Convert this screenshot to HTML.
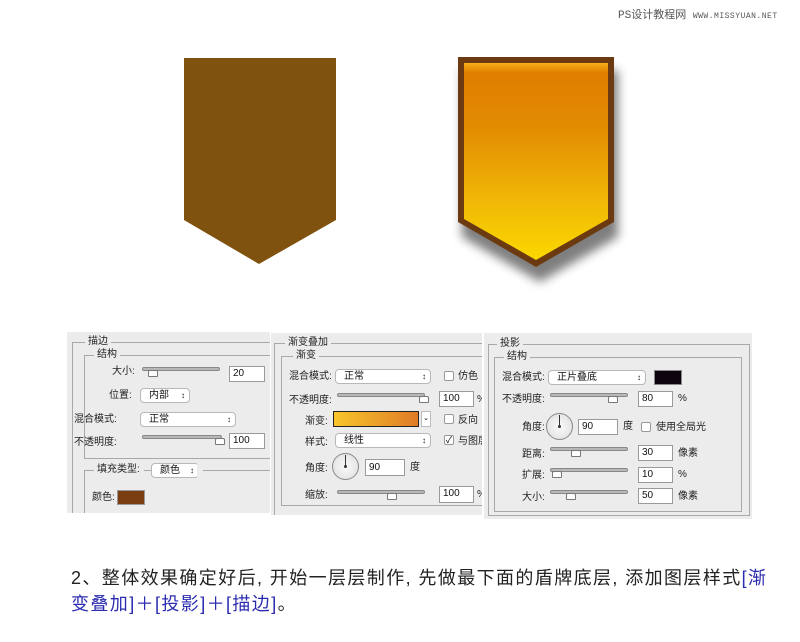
<!DOCTYPE html>
<html><head><meta charset="utf-8">
<style>
*{margin:0;padding:0;box-sizing:border-box}
body{width:800px;height:642px;background:#fff;position:relative;overflow:hidden;font-family:"Liberation Sans","Noto Sans CJK SC",sans-serif;}
.a{position:absolute}
.panel{position:absolute;background:#ececec;overflow:hidden}
.l{position:absolute;font-size:10px;color:#222;line-height:12px;white-space:nowrap}
.box{position:absolute;border:1px solid #a8a8a8}
.t{position:absolute;background:#ececec;font-size:10px;color:#222;line-height:12px;padding:0 3px}
.in{position:absolute;background:#fff;border:1px solid #9a9a9a;font-size:10px;line-height:13px;padding-left:3px;color:#111}
.dd{position:absolute;background:#fff;border:1px solid #b8b8b8;border-radius:4px;font-size:10px;line-height:13px;padding-left:8px;color:#111}
.dd:after{content:"\2195";position:absolute;right:4px;top:0;font-size:8px}
.sl{position:absolute;height:4px;background:#b8b8b8;border:1px solid #888;border-radius:2px}
.th{position:absolute;width:10px;height:7px;border:1px solid #777;background:#fff;border-radius:2px 2px 1px 1px}
.cb{position:absolute;width:10px;height:10px;border:1px solid #999;background:#fff;border-radius:2px;font-size:9px;line-height:9px;text-align:center}
.dial{position:absolute;width:27px;height:27px;border:1px solid #888;border-radius:50%;background:radial-gradient(#fafafa,#ddd)}
.dial:before{content:"";position:absolute;left:12px;top:1px;width:1px;height:12px;background:#333}
.dial:after{content:"";position:absolute;left:11px;top:11px;width:3px;height:3px;border-radius:50%;background:#333}
</style></head><body>

<div class="l" style="left:618px;top:10px;font-size:11px;color:#555;font-family:'Liberation Mono','Noto Sans CJK SC',monospace">PS设计教程网 <span style="font-size:8px;letter-spacing:0.5px">WWW.MISSYUAN.NET</span></div>

<svg class="a" style="left:0;top:0" width="800" height="300">
<defs>
<linearGradient id="g" x1="0" y1="0" x2="0" y2="1">
<stop offset="0" stop-color="#f7b019"/><stop offset="0.05" stop-color="#e07e00"/><stop offset="0.35" stop-color="#e38d02"/><stop offset="0.7" stop-color="#f0b806"/><stop offset="1" stop-color="#fbd800"/>
</linearGradient>
<filter id="sh" x="-30%" y="-30%" width="160%" height="170%"><feGaussianBlur stdDeviation="5"/></filter>
</defs>
<polygon points="184,58 336,58 336,220 259,264 184,220" fill="#80520f"/>
<polygon points="462,70 618,70 618,237 540,282 462,237" fill="#000" opacity="0.5" filter="url(#sh)"/>
<polygon points="458,57 614,57 614,222 536,267 458,222" fill="#6b3a10"/>
<polygon points="464,63 608,63 608,219 536,260 464,219" fill="url(#g)"/>
</svg>

<!-- panel 1 -->
<div class="panel" style="left:67px;top:332px;width:203px;height:181px">
 <div class="box" style="left:5px;top:10px;width:200px;height:175px;border-right:none;border-bottom:none"></div>
 <div class="t" style="left:18px;top:4px">描边</div>
 <div class="box" style="left:17px;top:23px;width:190px;height:104px;border-right:none"></div>
 <div class="t" style="left:27px;top:17px">结构</div>
 <div class="l" style="left:45px;top:34px">大小:</div>
 <div class="sl" style="left:75px;top:35px;width:78px"></div><div class="th" style="left:81px;top:38px"></div>
 <div class="in" style="left:162px;top:34px;width:36px;height:16px">20</div>
 <div class="l" style="left:42px;top:58px">位置:</div>
 <div class="dd" style="left:73px;top:56px;width:50px;height:15px">内部</div>
 <div class="l" style="left:7px;top:82px">混合模式:</div>
 <div class="dd" style="left:73px;top:80px;width:96px;height:15px">正常</div>
 <div class="l" style="left:7px;top:105px">不透明度:</div>
 <div class="sl" style="left:75px;top:103px;width:80px"></div><div class="th" style="left:148px;top:106px"></div>
 <div class="in" style="left:162px;top:101px;width:36px;height:16px">100</div>
 <div class="box" style="left:17px;top:138px;width:190px;height:50px;border-right:none;border-bottom:none"></div>
 <div class="t" style="left:27px;top:132px;padding-right:4px">填充类型: </div>
 <div class="dd" style="left:84px;top:131px;width:48px;height:15px">颜色</div>
 <div class="a" style="left:130px;top:131px;width:6px;height:14px;background:#ececec"></div>
 <div class="l" style="left:25px;top:160px">颜色:</div>
 <div class="a" style="left:50px;top:158px;width:28px;height:15px;background:#7a3e12;border:1px solid #999"></div>
</div>

<!-- panel 2 -->
<div class="panel" style="left:271px;top:333px;width:211px;height:182px">
 <div class="box" style="left:3px;top:10px;width:215px;height:180px;border-right:none"></div>
 <div class="t" style="left:14px;top:4px">渐变叠加</div>
 <div class="box" style="left:10px;top:23px;width:210px;height:150px;border-right:none"></div>
 <div class="t" style="left:22px;top:17px">渐变</div>
 <div class="l" style="left:18px;top:38px">混合模式:</div>
 <div class="dd" style="left:64px;top:36px;width:96px;height:15px">正常</div>
 <div class="cb" style="left:173px;top:38px"></div><div class="l" style="left:187px;top:38px">仿色</div>
 <div class="l" style="left:18px;top:62px">不透明度:</div>
 <div class="sl" style="left:66px;top:60px;width:88px"></div><div class="th" style="left:148px;top:63px"></div>
 <div class="in" style="left:168px;top:58px;width:35px;height:16px">100</div><div class="l" style="left:206px;top:61px">%</div>
 <div class="l" style="left:34px;top:83px">渐变:</div>
 <div class="a" style="left:62px;top:78px;width:86px;height:16px;border:1px solid #222;background:linear-gradient(90deg,#f8c52a,#eca52a 45%,#e07b26)"></div>
 <div class="a" style="left:150px;top:78px;width:10px;height:16px;background:#fff;border:1px solid #bbb;font-size:7px;text-align:center;line-height:14px">⌄</div>
 <div class="cb" style="left:173px;top:81px"></div><div class="l" style="left:187px;top:82px">反向</div>
 <div class="l" style="left:34px;top:104px">样式:</div>
 <div class="dd" style="left:64px;top:100px;width:96px;height:15px">线性</div>
 <div class="cb" style="left:173px;top:102px">✓</div><div class="l" style="left:187px;top:103px">与图层</div>
 <div class="l" style="left:34px;top:130px">角度:</div>
 <div class="dial" style="left:61px;top:120px"></div>
 <div class="in" style="left:94px;top:126px;width:40px;height:17px;line-height:15px">90</div>
 <div class="l" style="left:139px;top:129px">度</div>
 <div class="l" style="left:34px;top:157px">缩放:</div>
 <div class="sl" style="left:66px;top:157px;width:88px"></div><div class="th" style="left:116px;top:160px"></div>
 <div class="in" style="left:168px;top:153px;width:35px;height:17px">100</div><div class="l" style="left:206px;top:156px">%</div>
</div>

<!-- panel 3 -->
<div class="panel" style="left:484px;top:333px;width:268px;height:186px">
 <div class="box" style="left:4px;top:11px;width:262px;height:172px"></div>
 <div class="t" style="left:13px;top:5px">投影</div>
 <div class="box" style="left:10px;top:24px;width:248px;height:155px"></div>
 <div class="t" style="left:20px;top:18px">结构</div>
 <div class="l" style="left:18px;top:39px">混合模式:</div>
 <div class="dd" style="left:64px;top:37px;width:98px;height:15px">正片叠底</div>
 <div class="a" style="left:170px;top:37px;width:28px;height:15px;background:#0e0410;border:1px solid #888"></div>
 <div class="l" style="left:18px;top:61px">不透明度:</div>
 <div class="sl" style="left:66px;top:60px;width:78px"></div><div class="th" style="left:124px;top:63px"></div>
 <div class="in" style="left:154px;top:58px;width:35px;height:16px">80</div><div class="l" style="left:194px;top:60px">%</div>
 <div class="l" style="left:38px;top:89px">角度:</div>
 <div class="dial" style="left:62px;top:80px"></div>
 <div class="in" style="left:94px;top:86px;width:40px;height:16px">90</div>
 <div class="l" style="left:139px;top:88px">度</div>
 <div class="cb" style="left:157px;top:89px"></div><div class="l" style="left:172px;top:89px">使用全局光</div>
 <div class="l" style="left:38px;top:116px">距离:</div>
 <div class="sl" style="left:66px;top:114px;width:78px"></div><div class="th" style="left:87px;top:117px"></div>
 <div class="in" style="left:154px;top:112px;width:35px;height:16px">30</div><div class="l" style="left:194px;top:115px">像素</div>
 <div class="l" style="left:38px;top:137px">扩展:</div>
 <div class="sl" style="left:66px;top:135px;width:78px"></div><div class="th" style="left:68px;top:138px"></div>
 <div class="in" style="left:154px;top:134px;width:35px;height:16px">10</div><div class="l" style="left:194px;top:136px">%</div>
 <div class="l" style="left:38px;top:159px">大小:</div>
 <div class="sl" style="left:66px;top:157px;width:78px"></div><div class="th" style="left:82px;top:160px"></div>
 <div class="in" style="left:154px;top:155px;width:35px;height:16px">50</div><div class="l" style="left:194px;top:158px">像素</div>
</div>

<div class="a" style="left:71px;top:565px;width:710px;font-size:18px;letter-spacing:1.4px;line-height:26px;color:#222;font-family:'Liberation Sans','Noto Sans CJK SC',sans-serif">2、整体效果确定好后, 开始一层层制作, 先做最下面的盾牌底层, 添加图层样式<span style="color:#2b2bb0">[渐<br>变叠加]＋[投影]＋[描边]</span>。</div>
</body></html>
